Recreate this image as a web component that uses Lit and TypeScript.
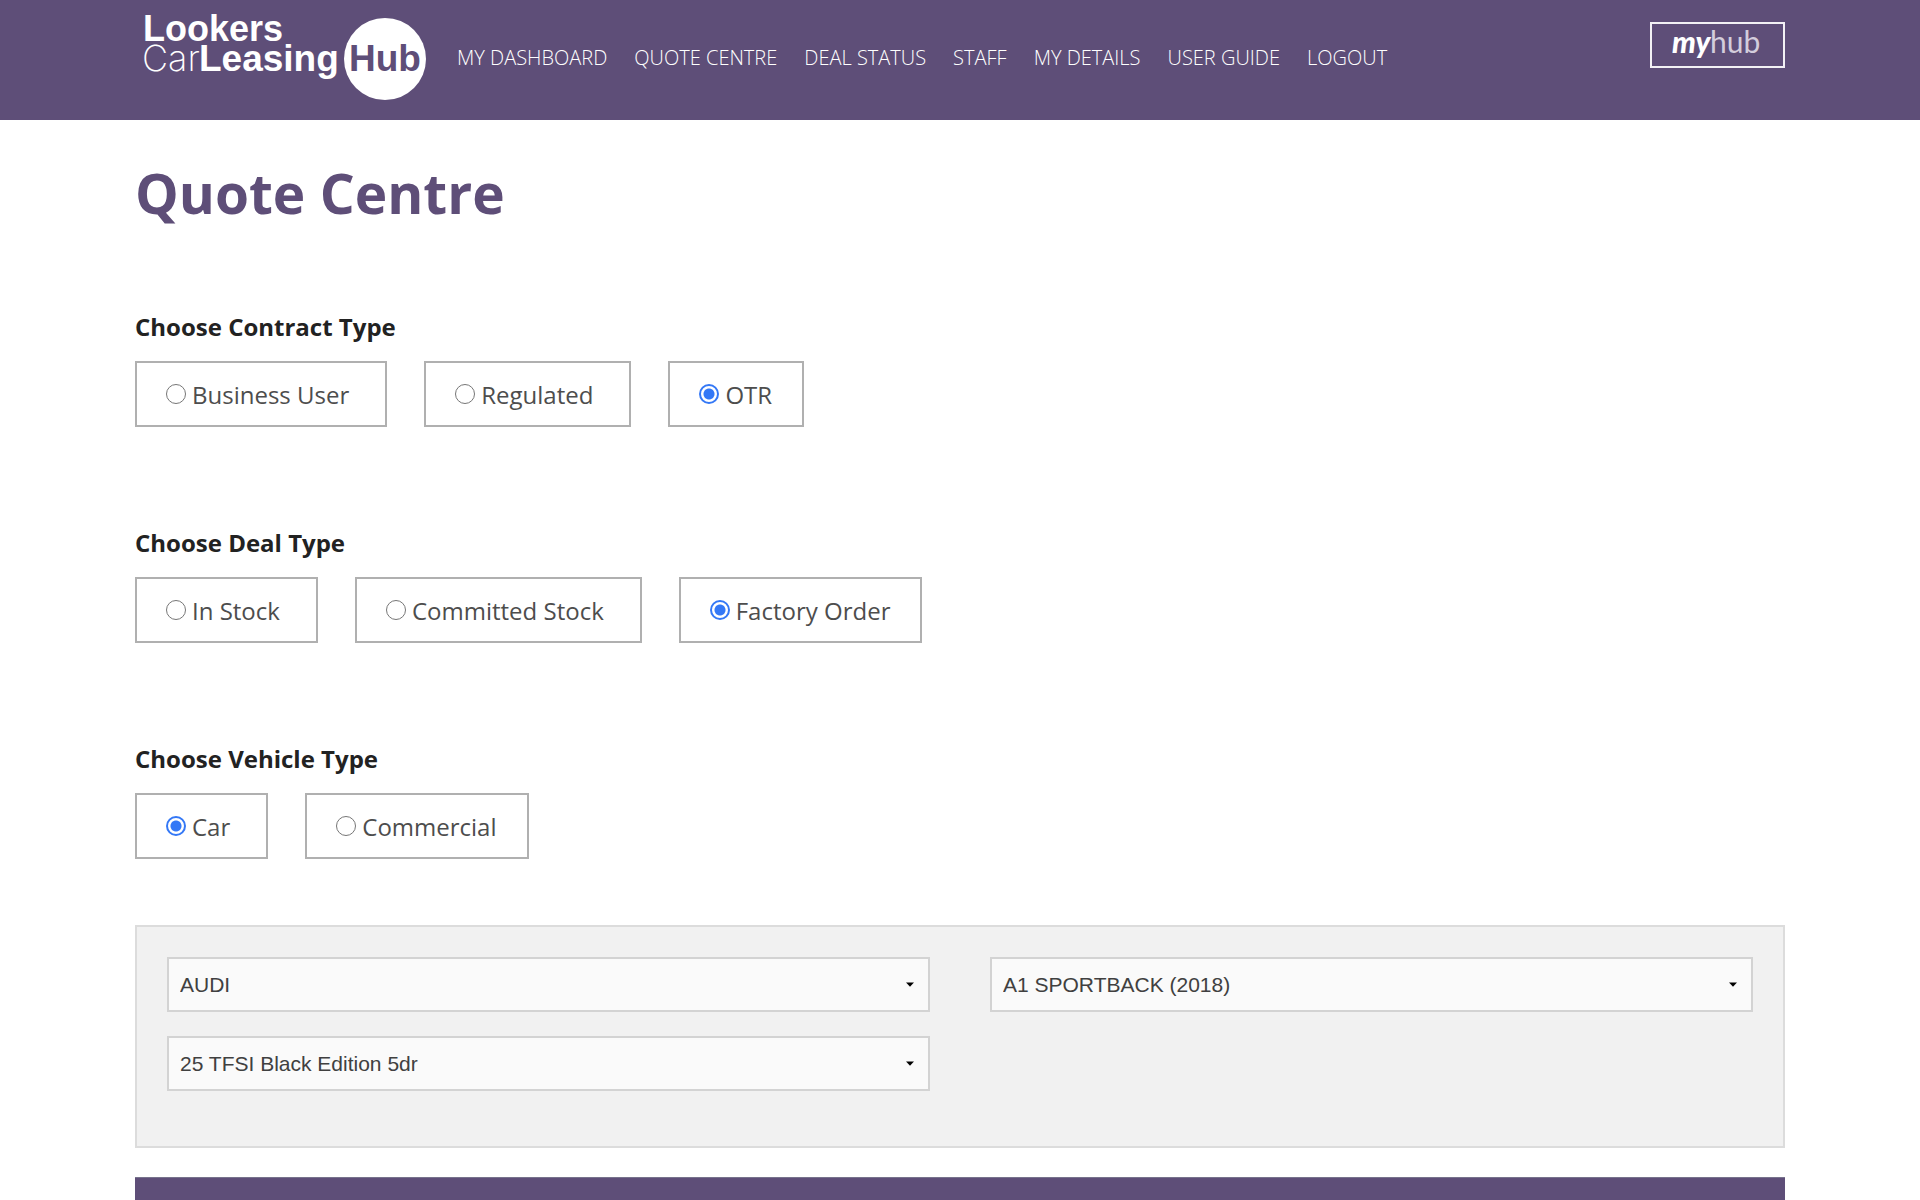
import { LitElement, html, css } from "lit";
import { customElement, property } from "lit/decorators.js";

interface Choice {
  label: string;
  checked?: boolean;
}

@customElement("site-header")
class SiteHeader extends LitElement {
  static styles = css`
    :host {
      display: block;
      background: #5e4e78;
      color: #fff;
    }
    .inner {
      box-sizing: border-box;
      max-width: 1650px;
      min-height: 120px;
      margin: 0 auto;
      display: flex;
      align-items: flex-start;
    }
    .logo {
      display: block;
      margin-left: 8px;
      margin-right: 30px;
      padding-top: 8px;
    }
    .logo svg,
    .hub svg {
      display: block;
    }
    .bold {
      font-family: "Liberation Sans", Arial, sans-serif;
      font-weight: 700;
      font-size: 36px;
    }
    .line {
      font-size: 37px;
    }
    .thin {
      font-family: Inter, "Liberation Sans", sans-serif;
      font-weight: 200;
      font-size: 36px;
    }
    .my {
      font-family: Lato, sans-serif;
      font-weight: 900;
      font-style: italic;
      font-size: 30px;
    }
    .hubtext {
      font-family: Lato, sans-serif;
      font-weight: 400;
      font-size: 30px;
    }
    .nav {
      display: flex;
      flex-wrap: wrap;
      gap: 8px 27px;
      padding-top: 44px;
      flex: 1;
    }
    .nav a {
      color: #fff;
      text-decoration: none;
      font: 300 20px/28px "Open Sans", sans-serif;
    }
    .hub {
      margin-top: 22px;
      border: 2px solid #f3f1f5;
    }
  `;

  private links = [
    "MY DASHBOARD",
    "QUOTE CENTRE",
    "DEAL STATUS",
    "STAFF",
    "MY DETAILS",
    "USER GUIDE",
    "LOGOUT",
  ];

  render() {
    return html`
      <header class="inner">
        <a class="logo" href="#">
          <svg width="284" height="96" viewBox="0 0 284 96" fill="#fff">
            <text class="bold" x="0" y="33">Lookers</text>
            <text class="thin" x="-1" y="63">Car</text>
            <text class="bold line" x="56" y="63">Leasing</text>
            <circle cx="242" cy="51" r="41"></circle>
            <text class="bold line" x="206" y="63" fill="#5e4e78">Hub</text>
          </svg>
        </a>
        <nav class="nav">
          ${this.links.map((l) => html`<a href="#">${l}</a>`)}
        </nav>
        <a class="hub" href="#">
          <svg width="131" height="42" viewBox="0 0 131 42" fill="#fff">
            <text class="my" x="20" y="29">my</text>
            <text class="hubtext" x="58" y="29" fill="#d3cddc">hub</text>
          </svg>
        </a>
      </header>
    `;
  }
}

@customElement("choice-group")
class ChoiceGroup extends LitElement {
  @property() legend = "";
  @property() name = "";
  @property({ attribute: false }) choices: Choice[] = [];

  static styles = css`
    :host {
      display: block;
    }
    .group {
      border: 0;
      margin: 0;
      padding: 0;
      min-width: 0;
    }
    .legend {
      padding: 0;
      margin-bottom: 17px;
      color: #222;
      font: 700 24px/34px "Open Sans", sans-serif;
    }
    .row {
      display: flex;
      flex-wrap: wrap;
      gap: 16px 37px;
    }
    .choice {
      display: flex;
      align-items: center;
      gap: 6px;
      padding: 15px 36px 13px 29px;
      border: 2px solid #b0b0b0;
      color: #4d4d4d;
      font: 400 24px/34px "Open Sans", sans-serif;
    }
    .choice:last-child {
      padding-right: 30px;
    }
    .radio {
      appearance: none;
      box-sizing: border-box;
      width: 20px;
      height: 20px;
      margin: 0 0 2px;
      border: 1px solid #767676;
      border-radius: 50%;
      background: #fff;
    }
    .radio:checked {
      border: 2px solid #3478f6;
      background: radial-gradient(circle, #3478f6 0 5px, #fff 6px);
    }
  `;

  render() {
    return html`
      <fieldset class="group">
        <legend class="legend">${this.legend}</legend>
        <div class="row">
          ${this.choices.map(
            (c) => html`<label class="choice">
              <input class="radio" type="radio" name=${this.name} .checked=${!!c.checked} />
              <span>${c.label}</span>
            </label>`
          )}
        </div>
      </fieldset>
    `;
  }
}

@customElement("app-root")
class AppRoot extends LitElement {
  static styles = css`
    :host {
      display: flex;
      flex-direction: column;
      min-height: 100vh;
      background: #fff;
    }
    .page {
      box-sizing: border-box;
      width: 100%;
      max-width: 1650px;
      margin: 0 auto;
      flex: 1;
      display: flex;
      flex-direction: column;
    }
    .title {
      margin: 35px 0 79px;
      color: #5e4e78;
      font: 700 55px/76px "Open Sans", sans-serif;
    }
    .groups {
      display: flex;
      flex-direction: column;
      gap: 99px;
    }
    .panel {
      display: grid;
      grid-template-columns: 1fr 1fr;
      gap: 24px 60px;
      margin: 66px 0 29px;
      padding: 30px 30px 55px;
      border: 2px solid #dcdcdc;
      background: #f1f1f1;
    }
    .field {
      display: grid;
      align-items: center;
    }
    .select {
      grid-area: 1 / 1;
      appearance: none;
      box-sizing: border-box;
      width: 100%;
      height: 55px;
      padding: 0 40px 0 11px;
      border: 2px solid #d3d3d3;
      border-radius: 0;
      background: #fafafa;
      color: #404040;
      font: 400 21px/28px "Liberation Sans", Arial, sans-serif;
    }
    .arrow {
      grid-area: 1 / 1;
      justify-self: end;
      margin-right: 16px;
      pointer-events: none;
    }
    .bar {
      flex: 1;
      min-height: 22px;
      border-top: 1px solid #77738c;
      background: #5e4e78;
    }
  `;

  private vehicles = [
    { name: "Manufacturer", value: "AUDI" },
    { name: "Model", value: "A1 SPORTBACK (2018)" },
    { name: "Derivative", value: "25 TFSI Black Edition 5dr" },
  ];

  render() {
    return html`
      <site-header></site-header>
      <main class="page">
        <h1 class="title">Quote Centre</h1>
        <div class="groups">
          <choice-group
            legend="Choose Contract Type"
            name="contract"
            .choices=${[{ label: "Business User" }, { label: "Regulated" }, { label: "OTR", checked: true }]}
          ></choice-group>
          <choice-group
            legend="Choose Deal Type"
            name="deal"
            .choices=${[{ label: "In Stock" }, { label: "Committed Stock" }, { label: "Factory Order", checked: true }]}
          ></choice-group>
          <choice-group
            legend="Choose Vehicle Type"
            name="vehicle"
            .choices=${[{ label: "Car", checked: true }, { label: "Commercial" }]}
          ></choice-group>
        </div>
        <section class="panel">
          ${this.vehicles.map(
            (v) => html`<div class="field">
              <select class="select" aria-label=${v.name}>
                <option>${v.value}</option>
              </select>
              <svg class="arrow" width="8" height="5" viewBox="0 0 8 5"><path d="M0 0.5h8L4 4.8z"></path></svg>
            </div>`
          )}
        </section>
        <div class="bar"></div>
      </main>
    `;
  }
}
